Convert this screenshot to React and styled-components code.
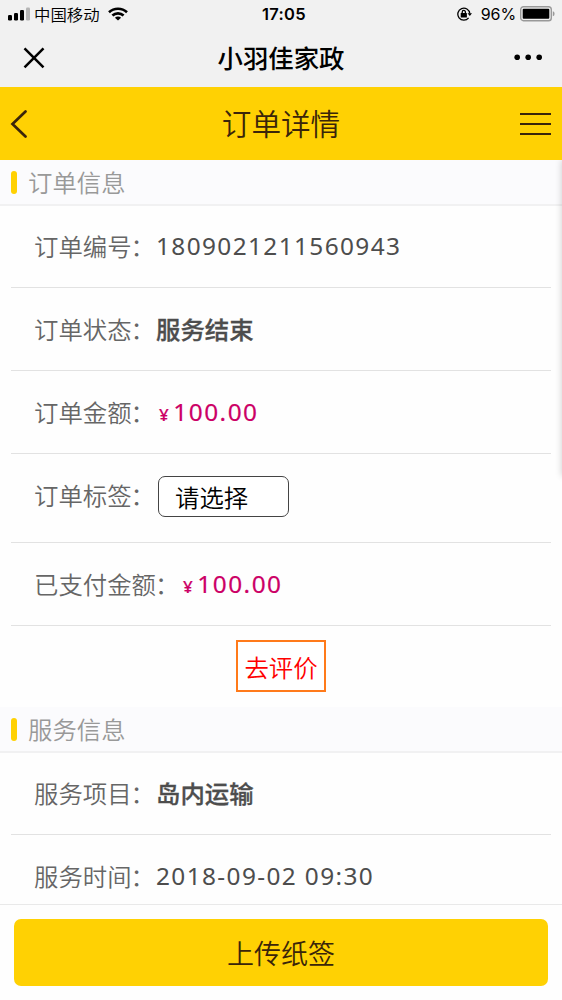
import React from 'react';
import styled, { createGlobalStyle } from 'styled-components';

const GlobalStyle = createGlobalStyle`
  * {
    box-sizing: border-box;
  }

  body {
    margin: 0;
    background: #fefefe;
    font-family: 'Noto Sans CJK SC', sans-serif;
  }
`;

const Page = styled.div`
  position: relative;
  display: flex;
  flex-direction: column;
  width: 562px;
  height: 1000px;
  overflow: hidden;
  background: #fefefe;
`;

const StatusBar = styled.div`
  display: grid;
  grid-template-columns: 1fr auto 1fr;
  align-items: center;
  height: 28px;
  padding: 0 7px 0 8px;
  background: #f1f1f1;
  color: #000;
`;

const StatusGroup = styled.div`
  display: flex;
  align-items: center;
  justify-content: ${({ $end }) => ($end ? 'flex-end' : 'flex-start')};
`;

const Carrier = styled.span`
  margin: 0 8px 0 4px;
  font-size: 16.4px;
  font-weight: 350;
  line-height: 28px;
`;

const Clock = styled.span`
  font-family: Inter, sans-serif;
  font-size: 16.5px;
  font-weight: 600;
  letter-spacing: 0.3px;
  padding-left: 5px;
`;

const Percent = styled.span`
  margin: 0 4px 0 9px;
  font-family: Inter, sans-serif;
  font-size: 16px;
  letter-spacing: -0.1px;
`;

const AppBar = styled.div`
  display: flex;
  align-items: center;
  justify-content: space-between;
  height: 59px;
  padding: 0 19px 0 23px;
  background: #f1f1f1;
`;

const AppTitle = styled.h1`
  margin: 0;
  padding-left: 3px;
  font-size: 25.4px;
  font-weight: 500;
  line-height: 59px;
`;

const PageHeader = styled.header`
  display: flex;
  align-items: center;
  justify-content: space-between;
  height: 73px;
  padding: 0 10px;
  background: #ffd103;
  color: #3a250a;
`;

const PageTitle = styled.h2`
  margin: 0;
  padding-bottom: 2px;
  font-size: 29.6px;
  font-weight: 350;
  line-height: 71px;
`;

const Content = styled.main`
  flex: 1;
  overflow: hidden;
`;

const SectionTitle = styled.h3`
  display: flex;
  align-items: center;
  gap: 11px;
  height: 46px;
  margin: 0;
  padding: 0 11px;
  background: #fbfbfd;
  border-bottom: 2px solid #f1f1f2;
  color: #999;
  font-size: 24.4px;
  font-weight: 350;
  line-height: 44px;

  &::before {
    content: '';
    width: 6px;
    height: 23px;
    border-radius: 3px;
    background: #ffd103;
  }
`;

const Row = styled.div`
  display: flex;
  align-items: center;
  height: ${({ $height }) => $height || 83}px;
  margin: 0 11px;
  padding: 0 0 2px 23px;
  border-bottom: 1px solid #e2e2e2;
  font-size: 24.4px;
`;

const Label = styled.span`
  width: ${({ $wide }) => ($wide ? 146 : 122)}px;
  padding-bottom: ${({ $raised }) => ($raised ? 6 : 0)}px;
  color: #666;
  font-weight: 350;
  white-space: nowrap;
`;

const Colon = styled.span`
  margin-left: -1px;
`;

const Value = styled.span`
  color: #4d4d4d;
  font-family: 'Noto Sans', 'Noto Sans CJK SC', sans-serif;
  font-size: 24.4px;
  font-weight: ${({ $strong }) => ($strong ? 500 : 400)};
  letter-spacing: ${({ $strong }) => ($strong ? 0 : 1.38)}px;
  -webkit-text-stroke: ${({ $strong }) => ($strong ? 0.3 : 0)}px currentColor;
`;

const Price = styled(Value)`
  padding-left: 3px;
  color: #cc0066;
  letter-spacing: 1.5px;
  -webkit-text-stroke: 0.2px currentColor;
`;

const Yen = styled.span`
  margin-right: 3px;
  font-size: 17px;
  font-weight: 500;
`;

const TagSelect = styled.button`
  width: 131px;
  height: 41px;
  margin: 0 0 1px 2px;
  padding: 0 0 0 16px;
  border: 1px solid #444;
  border-radius: 7px;
  background: #fff;
  color: #000;
  font-family: inherit;
  font-size: 24.4px;
  font-weight: 350;
  line-height: 38px;
  text-align: left;
`;

const ReviewArea = styled.div`
  display: flex;
  justify-content: center;
  height: 81px;
  padding-top: 14px;
`;

const ReviewButton = styled.button`
  width: 90px;
  height: 52px;
  padding: 0;
  border: 2px solid #ff7a1a;
  background: #fff;
  color: #ff0000;
  font-family: inherit;
  font-size: 24.4px;
  font-weight: 350;
`;

const BottomBar = styled.footer`
  height: 96px;
  padding: 14px 14px 0;
  border-top: 1px solid #e9e9e9;
  background: #fefefe;
`;

const UploadButton = styled.button`
  width: 100%;
  height: 67px;
  padding: 0;
  border: 0;
  border-radius: 7px;
  background: #ffd103;
  color: #3a250a;
  font-family: inherit;
  font-size: 27px;
  font-weight: 350;
`;

const DrawerEdge = styled.div`
  position: absolute;
  top: 160px;
  left: 562px;
  width: 20px;
  height: 316px;
  box-shadow: 0 0 7px rgba(0, 0, 0, 0.2);
  clip-path: inset(0 0 -10px -10px);
`;

const SignalIcon = () => (
  <svg width="22" height="14" viewBox="0 0 22 14">
    <rect x="0" y="8" width="4" height="5.5" rx="1.2" />
    <rect x="6" y="6" width="4" height="7.5" rx="1.2" />
    <rect x="12" y="3" width="4" height="10.5" rx="1.2" />
    <rect x="18" y="0.5" width="4" height="13" rx="1.2" fill="#b5b5b5" />
  </svg>
);

const WifiIcon = () => (
  <svg width="20" height="14" viewBox="0 0 20 14" fill="none" stroke="#000" strokeWidth="2.6">
    <path d="M1 5.2C6 .5 14 .5 19 5.2" />
    <path d="M4.4 8.5C7.5 5.6 12.5 5.6 15.6 8.5" />
    <path d="M10 13.6L6.9 10.7C8.6 9.1 11.4 9.1 13.1 10.7Z" fill="#000" stroke="none" />
  </svg>
);

const RotationLockIcon = () => (
  <svg width="15" height="14" viewBox="0 0 15 14" fill="none" stroke="#000" strokeWidth="1.3">
    <path d="M11.6 10.8A6 6 0 1 1 12.8 6.5" />
    <path d="M10.5 6.3H15L12.8 9Z" fill="#000" stroke="none" />
    <rect x="3.7" y="6" width="6.2" height="4.5" rx=".5" fill="#000" stroke="none" />
    <path d="M5.2 6.2V5.2A1.6 1.8 0 0 1 8.4 5.2V6.2" />
  </svg>
);

const BatteryIcon = () => (
  <svg width="35" height="16" viewBox="0 0 35 16">
    <rect x=".7" y=".7" width="30.6" height="14" rx="2.8" fill="none" stroke="#999" strokeWidth="1.4" />
    <rect x="2.7" y="2.7" width="26.6" height="10" rx="1" />
    <path d="M32.8 5.2Q34.6 5.4 34.6 7.7T32.8 10.2Z" fill="#999" />
  </svg>
);

const CloseIcon = () => (
  <svg width="22" height="22" viewBox="0 0 22 22" stroke="#000" strokeWidth="2.5">
    <path d="M1.5 1.3L20.5 20.3M20.5 1.3L1.5 20.3" />
  </svg>
);

const MoreIcon = () => (
  <svg width="29" height="8" viewBox="0 0 29 8">
    <circle cx="3.2" cy="3.2" r="2.8" />
    <circle cx="14.2" cy="3.2" r="2.8" />
    <circle cx="25.2" cy="3.2" r="2.8" />
  </svg>
);

const BackIcon = () => (
  <svg width="32" height="28" viewBox="0 0 32 28" fill="none" stroke="currentColor" strokeWidth="2.7" strokeLinecap="round">
    <path d="M15.5 1.5L2.5 14L15.5 26.5" />
  </svg>
);

const MenuIcon = () => (
  <svg width="32" height="24" viewBox="0 0 32 24" stroke="currentColor" strokeWidth="2">
    <path d="M0 2H31M0 12H31M0 22H31" />
  </svg>
);

const Field = ({ label, height, wide, raised, children }) => (
  <Row $height={height}>
    <Label $wide={wide} $raised={raised}>
      {label}
      <Colon>：</Colon>
    </Label>
    {children}
  </Row>
);

const App = () => (
  <>
    <GlobalStyle />
    <Page>
      <StatusBar>
        <StatusGroup>
          <SignalIcon />
          <Carrier>中国移动</Carrier>
          <WifiIcon />
        </StatusGroup>
        <Clock>17:05</Clock>
        <StatusGroup $end>
          <RotationLockIcon />
          <Percent>96%</Percent>
          <BatteryIcon />
        </StatusGroup>
      </StatusBar>

      <AppBar>
        <CloseIcon />
        <AppTitle>小羽佳家政</AppTitle>
        <MoreIcon />
      </AppBar>

      <PageHeader>
        <BackIcon />
        <PageTitle>订单详情</PageTitle>
        <MenuIcon />
      </PageHeader>

      <Content>
        {/* Order info */}
        <SectionTitle>订单信息</SectionTitle>
        <Field label="订单编号" height={82}>
          <Value>1809021211560943</Value>
        </Field>
        <Field label="订单状态">
          <Value $strong>服务结束</Value>
        </Field>
        <Field label="订单金额">
          <Price><Yen>¥</Yen>100.00</Price>
        </Field>
        <Field label="订单标签" height={89} raised>
          <TagSelect>请选择</TagSelect>
        </Field>
        <Field label="已支付金额" wide>
          <Price><Yen>¥</Yen>100.00</Price>
        </Field>
        <ReviewArea>
          <ReviewButton>去评价</ReviewButton>
        </ReviewArea>

        {/* Service info */}
        <SectionTitle>服务信息</SectionTitle>
        <Field label="服务项目" height={82}>
          <Value $strong>岛内运输</Value>
        </Field>
        <Field label="服务时间">
          <Value>2018-09-02 09:30</Value>
        </Field>
      </Content>

      <BottomBar>
        <UploadButton>上传纸签</UploadButton>
      </BottomBar>
      <DrawerEdge />
    </Page>
  </>
);

export default App;
